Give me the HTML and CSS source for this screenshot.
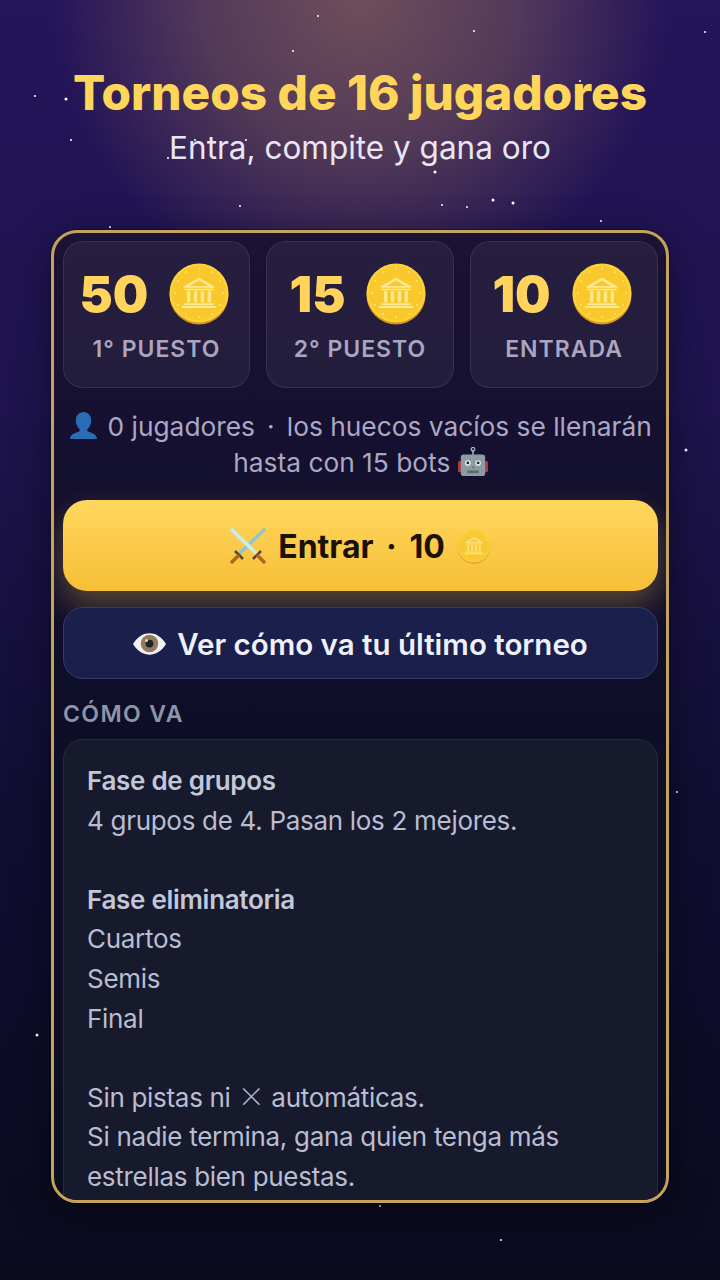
FILE: index.html
```html
<!DOCTYPE html>
<html lang="es">
<head>
<meta charset="utf-8">
<title>Torneos</title>
<link rel="stylesheet" href="styles.css">
</head>
<body>
<svg class="defs" width="0" height="0" aria-hidden="true">
  <defs>
    <symbol id="coin" viewBox="0 0 60 62">
      <circle cx="30" cy="32" r="29.500" fill="#d9951a"/>
      <circle cx="30" cy="30" r="29.500" fill="#fbd23a"/>
      <circle cx="30" cy="30" r="27" fill="#f8c82c"/>
      <g fill="#ffe98c" transform="translate(30 30) scale(.86) translate(-30 -27)">
        <path d="M30 9 12 19.500v1.500h36v-1.500zM30 12.500 19 19h22z" fill-rule="evenodd"/>
        <rect x="13" y="22" width="34" height="2"/>
        <rect x="16" y="25" width="4" height="13"/>
        <rect x="24" y="25" width="4" height="13"/>
        <rect x="32" y="25" width="4" height="13"/>
        <rect x="40" y="25" width="4" height="13"/>
        <rect x="13" y="39" width="34" height="2"/>
        <rect x="10" y="42" width="40" height="2.500"/>
      </g>
      <g fill="#fde77a">
        <circle cx="30" cy="5.500" r="1"/><circle cx="43" cy="9" r="1"/><circle cx="51" cy="18" r="1"/>
        <circle cx="54" cy="30" r="1"/><circle cx="51" cy="42" r="1"/><circle cx="43" cy="51" r="1"/>
        <circle cx="30" cy="54" r="1"/><circle cx="17" cy="51" r="1"/><circle cx="9" cy="42" r="1"/>
        <circle cx="6" cy="30" r="1"/><circle cx="9" cy="18" r="1"/><circle cx="17" cy="9" r="1"/>
      </g>
    </symbol>
  </defs>
</svg>
<main class="screen">
  <svg class="stars" viewBox="0 0 720 1280" aria-hidden="true">
    <g fill="#fff">
      <circle cx="318" cy="16" r="1"/><circle cx="474" cy="31" r="1"/><circle cx="705" cy="32" r="1"/>
      <circle cx="293" cy="51" r="1"/><circle cx="35" cy="96" r="1"/><circle cx="66" cy="99" r="1.500"/>
      <circle cx="71" cy="140" r="1"/><circle cx="168" cy="158" r="1"/><circle cx="435" cy="172" r="1.500"/>
      <circle cx="240" cy="206" r="1"/><circle cx="442" cy="205" r="1"/><circle cx="467" cy="207" r="1"/>
      <circle cx="493" cy="200" r="1.500"/><circle cx="513" cy="203" r="1.500"/><circle cx="601" cy="221" r="1"/>
      <circle cx="110" cy="227" r="1"/><circle cx="580" cy="81" r="1"/><circle cx="498" cy="109" r="1"/>
      <circle cx="195" cy="140" r="1"/><circle cx="246" cy="140" r="1"/>
      <circle cx="686" cy="450" r="1.500"/><circle cx="37" cy="1035" r="1.500"/><circle cx="677" cy="792" r="1"/>
      <circle cx="501" cy="1240" r="1"/><circle cx="380" cy="1206" r="1"/>
    </g>
  </svg>
  <header class="hero">
    <h1 class="hero-title">Torneos de 16 jugadores</h1>
    <p class="hero-sub">Entra, compite y gana oro</p>
  </header>
  <section class="card">
    <div class="stats">
      <div class="stat">
        <div class="stat-value"><span>50</span><svg class="coin-lg"><use href="#coin"/></svg></div>
        <div class="stat-label">1° PUESTO</div>
      </div>
      <div class="stat">
        <div class="stat-value"><span>15</span><svg class="coin-lg"><use href="#coin"/></svg></div>
        <div class="stat-label">2° PUESTO</div>
      </div>
      <div class="stat">
        <div class="stat-value"><span>10</span><svg class="coin-lg"><use href="#coin"/></svg></div>
        <div class="stat-label">ENTRADA</div>
      </div>
    </div>
    <p class="note">
      <svg class="emoji-person" viewBox="0 0 30 30" aria-hidden="true">
        <path fill="#2a6cb5" d="M15 1c5 0 8 4 8 9 0 4-2 7-4 9v2c3 1.500 10 2.500 10 8H1c0-5.500 7-6.500 10-8v-2c-2-2-4-5-4-9 0-5 3-9 8-9z"/>
      </svg> 0 jugadores &thinsp;·&thinsp; los huecos vacíos se llenarán hasta con 15 bots
      <svg class="emoji-robot" viewBox="0 0 32 32" aria-hidden="true">
        <rect x="0" y="15" width="4" height="12" rx="1.500" fill="#b03a3a"/>
        <rect x="28" y="15" width="4" height="12" rx="1.500" fill="#b03a3a"/>
        <rect x="15" y="3" width="2" height="6" fill="#8a97a0"/>
        <circle cx="16" cy="2.500" r="2" fill="none" stroke="#b0bcc4" stroke-width="1.200"/>
        <rect x="3" y="8" width="26" height="23" rx="3" fill="#8d9ba4"/>
        <circle cx="10.500" cy="17" r="3" fill="#e6edf0"/><circle cx="21.500" cy="17" r="3" fill="#e6edf0"/>
        <circle cx="10.500" cy="17" r="1.500" fill="#1f2a30"/><circle cx="21.500" cy="17" r="1.500" fill="#1f2a30"/>
        <path d="M14.500 21h3l-1.500 2z" fill="#b03a3a"/>
        <rect x="10" y="25" width="12" height="3" fill="#5c6a72"/>
      </svg>
    </p>
    <button class="btn-enter">
      <svg class="emoji-swords" viewBox="0 0 36 36" aria-hidden="true">
        <path d="M35 1 9 26" stroke="#8fc4d8" stroke-width="3.500"/>
        <path d="M1 1l26 25" stroke="#cfe9f1" stroke-width="3.500"/>
        <path d="M5 23l8 8M31 23l-8 8" stroke="#5e4420" stroke-width="2.500"/>
        <path d="M1 35l8-8M35 35l-8-8" stroke="#b0661f" stroke-width="3.500"/>
      </svg>
      <span>Entrar &thinsp;·&thinsp; 10</span>
      <svg class="coin-sm"><use href="#coin"/></svg>
    </button>
    <button class="btn-last">
      <svg class="emoji-eye" viewBox="0 0 34 24" aria-hidden="true">
        <path fill="#f1f1f1" d="M0 12C5 4 11 1 17 1s12 3 17 11c-5 8-11 11-17 11S5 20 0 12z"/>
        <circle cx="17" cy="11.500" r="9" fill="#94785f"/>
        <circle cx="17" cy="11.500" r="4" fill="#222"/>
        <circle cx="14" cy="8.500" r="1.500" fill="#ddd"/>
      </svg>
      <span>Ver cómo va tu último torneo</span>
    </button>
    <h2 class="section-label">CÓMO VA</h2>
    <div class="rules">
      <p><strong>Fase de grupos</strong><br>4 grupos de 4. Pasan los 2 mejores.</p>
      <p><strong>Fase eliminatoria</strong><br>Cuartos<br>Semis<br>Final</p>
      <p>Sin pistas ni <span class="cross">×</span> automáticas.<br>Si nadie termina, gana quien tenga más<br>estrellas bien puestas.</p>
    </div>
  </section>
</main>
</body>
</html>
```

FILE: styles.css
```css
* { box-sizing: border-box; }
html, body { margin: 0; padding: 0; }
body {
  width: 720px;
  height: 1280px;
  overflow: hidden;
  font-family: Inter, "Noto Sans", "Liberation Sans", sans-serif;
  background: #0a0b1e;
}
.defs { position: absolute; }
.screen {
  position: relative;
  width: 720px;
  height: 1280px;
  overflow: hidden;
  display: flex;
  flex-direction: column;
  align-items: center;
  background:
    radial-gradient(ellipse 310px 300px at 360px 0, rgba(255, 190, 90, 0.34), rgba(255, 190, 90, 0.22) 50%, rgba(255, 190, 90, 0) 100%),
    linear-gradient(180deg, #24145a 0%, #1f1450 30%, #110e33 62%, #0a0b1f 100%);
}
.stars { position: absolute; inset: 0; width: 720px; height: 1280px; z-index: 2; pointer-events: none; }
.hero { height: 230px; padding-top: 61px; text-align: center; position: relative; z-index: 1; }
.hero-title {
  margin: 0;
  font-size: 47.700px;
  line-height: 64px;
  font-weight: 800;
  color: #ffd65a;
  white-space: nowrap;
}
.hero-sub {
  margin: 3px 0 0;
  font-size: 31.500px;
  line-height: 40px;
  font-weight: 400;
  color: #e8e6f5;
}
.card {
  position: relative;
  z-index: 3;
  width: 618px;
  height: 973px;
  border: 3px solid #c4a45a;
  border-radius: 26px;
  padding: 8px 8px 0 9px;
  overflow: hidden;
  background: linear-gradient(180deg, #1b1236 0%, #0e0e28 50%, #0b0d22 100%);
  box-shadow: 0 0 0 1px rgba(0, 0, 0, 0.35), 0 10px 40px rgba(0, 0, 0, 0.45);
}
.stats { display: grid; grid-template-columns: 187fr 188fr 188fr; gap: 16px; }
.stat {
  height: 147px;
  border: 1px solid rgba(255, 255, 255, 0.09);
  border-radius: 20px;
  background: rgba(255, 235, 235, 0.055);
  display: flex;
  flex-direction: column;
  align-items: center;
  padding-top: 21px;
}
.stat-value {
  display: flex;
  align-items: center;
  justify-content: center;
  gap: 21px;
  height: 62px;
  padding-right: 4px;
  font-size: 50px;
  font-weight: 900;
  color: #ffd35c;
}
.coin-lg { width: 60px; height: 62px; display: block; }
.stat-label {
  margin-top: 9px;
  font-size: 23px;
  line-height: 30px;
  font-weight: 600;
  letter-spacing: 1px;
  color: #aaa6c0;
}
.note {
  margin: 21px 0 0;
  font-size: 26.300px;
  line-height: 36px;
  text-align: center;
  color: #aaa8c4;
}
.emoji-person { width: 29px; height: 29px; vertical-align: -4px; margin-right: 2px; }
.emoji-robot { width: 30px; height: 30px; vertical-align: -5px; }
.btn-enter, .btn-last {
  display: flex;
  align-items: center;
  justify-content: center;
  width: 100%;
  font-family: inherit;
  padding: 0;
}
.btn-enter {
  margin-top: 19px;
  height: 91px;
  padding-top: 1px;
  gap: 12px;
  border: 0;
  border-radius: 24px;
  background: linear-gradient(180deg, #ffd75e 0%, #f6bf36 100%);
  box-shadow: 0 14px 30px rgba(255, 200, 70, 0.3);
  font-size: 32px;
  font-weight: 700;
  color: #1a1206;
}
.emoji-swords { width: 36px; height: 36px; }
.coin-sm { width: 34px; height: 35px; opacity: 0.75; }
.btn-last {
  margin-top: 16px;
  height: 72px;
  padding-top: 1px;
  gap: 11px;
  border: 1px solid #343c68;
  border-radius: 20px;
  background: #1b1f4b;
  font-size: 29.500px;
  font-weight: 600;
  color: #eef0fb;
}
.emoji-eye { width: 33px; height: 24px; }
.section-label {
  margin: 21px 0 0;
  font-size: 23px;
  line-height: 28px;
  font-weight: 600;
  letter-spacing: 1.400px;
  color: #8f95a8;
}
.rules {
  margin-top: 11px;
  padding: 21px 23px 24px;
  border: 1px solid #262b3f;
  border-radius: 20px;
  background: #171a2c;
  font-size: 26px;
  letter-spacing: -0.300px;
  line-height: 39.600px;
  color: #b9bdd2;
}
.rules p { margin: 0 0 39.600px; }
.rules strong { font-weight: 600; color: #c3c7da; }
.cross { font-family: "Noto Sans CJK SC", sans-serif; font-weight: 300; font-size: 27px; line-height: 0; }
```
